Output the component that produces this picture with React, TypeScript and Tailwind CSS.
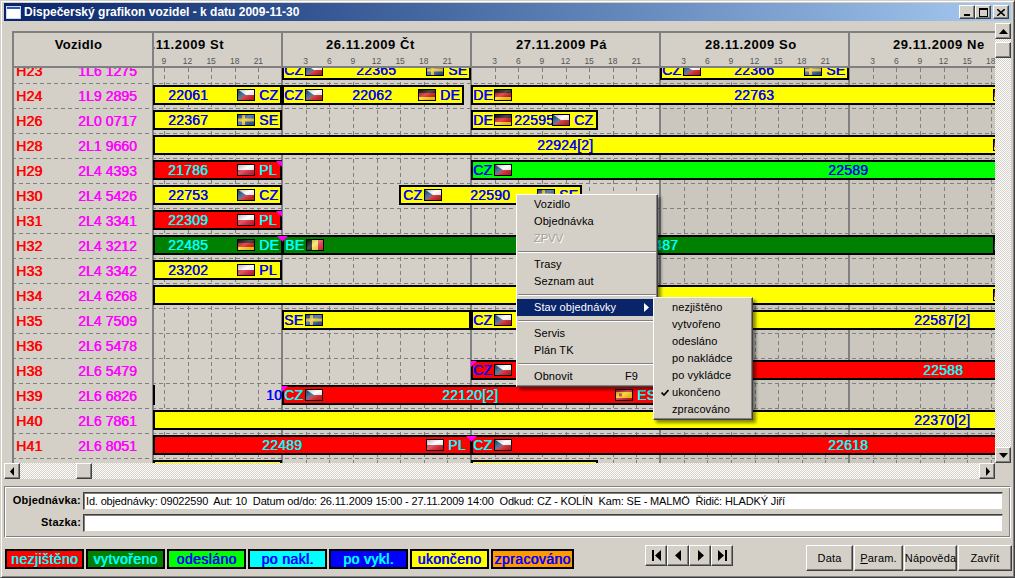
import React from "react";

type FlagCode = "CZ" | "SE" | "DE" | "PL" | "BE" | "ES";

type Item = { x: number; flag?: FlagCode; text?: string };

type Bar = { from: number; to: number; fill: string; ink: string; items?: Item[]; cornerL?: boolean; cornerR?: boolean };

type Row = { id: string; plate: string; bars: Bar[]; extra?: string };

const YEL = "bg-[#ffff00]";
const RED = "bg-[#ff0000]";
const LIME = "bg-[#00ff00]";
const GRN = "bg-[#008000]";
const BLUE = "text-[#0000ff]";
const CYAN = "text-[#00ffff]";

// x souřadnice jsou v px od levého okraje okna, přepočet je až v Gantt
const dest = (x: number, c: FlagCode): Item[] => [
  { x, flag: c },
  { x: x + 22, text: c },
];
const orig = (x: number, c: FlagCode): Item[] => [
  { x, text: c },
  { x: x + 21, flag: c },
];

const ROWS: Row[] = [
  {
    id: "H23",
    plate: "1L6 1275",
    bars: [
      { from: 282, to: 471, fill: YEL, ink: BLUE, items: [...orig(284, "CZ"), { x: 356, text: "22365" }, ...dest(426, "SE")] },
      { from: 660, to: 849, fill: YEL, ink: BLUE, items: [...orig(662, "CZ"), { x: 734, text: "22366" }, ...dest(804, "SE")] },
    ],
  },
  {
    id: "H24",
    plate: "1L9 2895",
    bars: [
      { from: 153, to: 282, fill: YEL, ink: BLUE, items: [{ x: 168, text: "22061" }, ...dest(237, "CZ")] },
      { from: 282, to: 464, fill: YEL, ink: BLUE, items: [...orig(284, "CZ"), { x: 352, text: "22062" }, ...dest(418, "DE")] },
      { from: 471, to: 1000, fill: YEL, ink: BLUE, items: [...orig(473, "DE"), { x: 734, text: "22763" }, { x: 993, flag: "DE" }] },
    ],
  },
  {
    id: "H26",
    plate: "2L0 0717",
    bars: [
      { from: 153, to: 282, fill: YEL, ink: BLUE, items: [{ x: 168, text: "22367" }, ...dest(237, "SE")] },
      { from: 471, to: 598, fill: YEL, ink: BLUE, items: [...orig(473, "DE"), { x: 514, text: "22595" }, ...dest(552, "CZ")] },
    ],
  },
  {
    id: "H28",
    plate: "2L1 9660",
    bars: [{ from: 153, to: 1000, fill: YEL, ink: BLUE, items: [{ x: 537, text: "22924[2]" }, { x: 993, flag: "DE" }] }],
  },
  {
    id: "H29",
    plate: "2L4 4393",
    bars: [
      { from: 153, to: 282, fill: RED, ink: CYAN, cornerR: true, items: [{ x: 168, text: "21786" }, ...dest(237, "PL")] },
      { from: 471, to: 1000, fill: LIME, ink: BLUE, items: [...orig(473, "CZ"), { x: 828, text: "22589" }] },
    ],
  },
  {
    id: "H30",
    plate: "2L4 5426",
    bars: [
      { from: 153, to: 282, fill: YEL, ink: BLUE, items: [{ x: 168, text: "22753" }, ...dest(237, "CZ")] },
      { from: 399, to: 582, fill: YEL, ink: BLUE, items: [...orig(403, "CZ"), { x: 470, text: "22590" }, ...dest(537, "SE")] },
    ],
  },
  {
    id: "H31",
    plate: "2L4 3341",
    bars: [{ from: 153, to: 282, fill: RED, ink: CYAN, cornerR: true, items: [{ x: 168, text: "22309" }, ...dest(237, "PL")] }],
  },
  {
    id: "H32",
    plate: "2L4 3212",
    bars: [
      { from: 153, to: 283, fill: GRN, ink: CYAN, cornerR: true, items: [{ x: 168, text: "22485" }, ...dest(237, "DE")] },
      { from: 282, to: 995, fill: GRN, ink: CYAN, cornerL: true, items: [...orig(285, "BE"), { x: 638, text: "22487" }, { x: 993, flag: "BE" }] },
    ],
  },
  {
    id: "H33",
    plate: "2L4 3342",
    bars: [{ from: 153, to: 282, fill: YEL, ink: BLUE, items: [{ x: 168, text: "23202" }, ...dest(237, "PL")] }],
  },
  {
    id: "H34",
    plate: "2L4 6268",
    bars: [{ from: 153, to: 1000, fill: YEL, ink: BLUE, items: [{ x: 993, flag: "DE" }] }],
  },
  {
    id: "H35",
    plate: "2L4 7509",
    bars: [
      { from: 282, to: 471, fill: YEL, ink: BLUE, items: [...orig(284, "SE")] },
      { from: 471, to: 1000, fill: YEL, ink: BLUE, items: [...orig(473, "CZ"), { x: 914, text: "22587[2]" }] },
    ],
  },
  { id: "H36", plate: "2L6 5478", bars: [] },
  {
    id: "H38",
    plate: "2L6 5479",
    bars: [{ from: 471, to: 1000, fill: RED, ink: BLUE, cornerL: true, items: [...orig(473, "CZ")] }],
    extra: "22588",
  },
  {
    id: "H39",
    plate: "2L6 6826",
    bars: [
      { from: 148, to: 155, fill: "bg-[#d4d0c8]", ink: BLUE },
      { from: 282, to: 670, fill: RED, ink: CYAN, cornerL: true, items: [...orig(284, "CZ"), { x: 442, text: "22120[2]" }, ...dest(615, "ES")] },
    ],
  },
  {
    id: "H40",
    plate: "2L6 7861",
    bars: [{ from: 153, to: 1000, fill: YEL, ink: BLUE, items: [{ x: 914, text: "22370[2]" }] }],
  },
  {
    id: "H41",
    plate: "2L6 8051",
    bars: [
      { from: 153, to: 472, fill: RED, ink: CYAN, cornerR: true, items: [{ x: 262, text: "22489" }, ...dest(426, "PL")] },
      { from: 471, to: 1000, fill: RED, ink: CYAN, cornerL: true, items: [...orig(473, "CZ"), { x: 828, text: "22618" }] },
    ],
  },
  {
    id: "",
    plate: "",
    bars: [
      { from: 153, to: 282, fill: YEL, ink: BLUE },
      { from: 471, to: 598, fill: YEL, ink: BLUE },
    ],
  },
];

const DAYS = [
  { x: 93, label: "25.11.2009 St", off: 43 },
  { x: 282, label: "26.11.2009 Čt", off: 44 },
  { x: 471, label: "27.11.2009 Pá", off: 45 },
  { x: 660, label: "28.11.2009 So", off: 45 },
  { x: 849, label: "29.11.2009 Ne", off: 44 },
];

const HOURS = [3, 6, 9, 12, 15, 18, 21];

const LEGEND = [
  { t: "nezjištěno", w: "w-[79px]", c: "bg-[#ff0000] text-[#00ffff]" },
  { t: "vytvořeno", w: "w-[79px]", c: "bg-[#008000] text-[#00ffff]" },
  { t: "odesláno", w: "w-[79px]", c: "bg-[#00ff00] text-[#0000ff]" },
  { t: "po nakl.", w: "w-[79px]", c: "bg-[#00ffff] text-[#0000ff]" },
  { t: "po vykl.", w: "w-[79px]", c: "bg-[#0000ff] text-[#00ffff]" },
  { t: "ukončeno", w: "w-[79px]", c: "bg-[#ffff00] text-[#0000ff]" },
  { t: "zpracováno", w: "w-[83px]", c: "bg-[#ff9900] text-[#0000ff]" },
];

const raised =
  "border border-t-white border-l-white border-r-[#404040] border-b-[#404040] shadow-[inset_-1px_-1px_0_#808080]";

function Flag({ code }: { code: FlagCode }) {
  const gid = "gloss";
  return (
    <svg width="18" height="12" viewBox="0 0 18 12" className="block">
      {code === "CZ" && (
        <>
          <rect width="18" height="6" fill="#fff" />
          <rect y="6" width="18" height="6" fill="#d7141a" />
          <path d="M0 0 L9 6 L0 12 Z" fill="#11457e" />
        </>
      )}
      {code === "SE" && (
        <>
          <rect width="18" height="12" fill="#1a4f9c" />
          <rect x="5" width="3" height="12" fill="#f2c40f" />
          <rect y="4.5" width="18" height="3" fill="#f2c40f" />
        </>
      )}
      {code === "DE" && (
        <>
          <rect width="18" height="4" fill="#000" />
          <rect y="4" width="18" height="4" fill="#dd0000" />
          <rect y="8" width="18" height="4" fill="#ffce00" />
        </>
      )}
      {code === "PL" && (
        <>
          <rect width="18" height="6" fill="#fff" />
          <rect y="6" width="18" height="6" fill="#e0102a" />
        </>
      )}
      {code === "BE" && (
        <>
          <rect width="6" height="12" fill="#000" />
          <rect x="6" width="6" height="12" fill="#fae042" />
          <rect x="12" width="6" height="12" fill="#ed2939" />
        </>
      )}
      {code === "ES" && (
        <>
          <rect width="18" height="12" fill="#c60b1e" />
          <rect y="3" width="18" height="6" fill="#ffc400" />
          <rect x="4" y="4.5" width="3" height="3" fill="#ad1519" />
        </>
      )}
      <defs>
        <linearGradient id={gid} x1="0" y1="0" x2="1" y2="1">
          <stop offset="0" stopColor="#000" stopOpacity="0.35" />
          <stop offset="0.45" stopColor="#fff" stopOpacity="0.3" />
          <stop offset="1" stopColor="#000" stopOpacity="0.12" />
        </linearGradient>
      </defs>
      <rect width="18" height="12" fill={`url(#${gid})`} />
      <rect x="0.5" y="0.5" width="17" height="11" fill="none" stroke="#000" />
    </svg>
  );
}

function GanttBar({ bar }: { bar: Bar }) {
  // pozice baru je z dat, proto inline style
  return (
    <div
      className={`absolute top-[2px] h-[20px] border-2 border-black ${bar.fill} ${bar.ink}`}
      style={{ left: bar.from - 153, width: bar.to - bar.from }}
    >
      {bar.items?.map((it, i) => (
        <div
          key={i}
          className="absolute top-[2px] h-[12px] flex items-center whitespace-nowrap"
          style={{ left: it.x - bar.from - 2 }}
        >
          {it.flag ? <Flag code={it.flag} /> : it.text}
        </div>
      ))}
      {bar.cornerR && (
        <div className="absolute -top-[1px] -right-[2px] w-0 h-0 border-t-[6px] border-t-[#ff00ff] border-l-[6px] border-l-transparent" />
      )}
      {bar.cornerL && (
        <div className="absolute -top-[1px] -left-[2px] w-0 h-0 border-t-[6px] border-t-[#ff00ff] border-r-[6px] border-r-transparent" />
      )}
    </div>
  );
}

function GridLines() {
  const xs: number[] = [];
  for (const d of [...DAYS.map((d) => d.x)]) {
    for (const h of HOURS) xs.push(d + (h / 3) * 23.625);
  }
  return (
    <svg className="absolute left-0 top-0" width="983" height="395" viewBox="0 0 983 395">
      <rect x="648" width="335" height="395" fill="#cbc7be" />
      {xs
        .filter((x) => x > 155)
        .map((x) => (
          <line
            key={x}
            x1={Math.round(x) - 12 + 0.5}
            x2={Math.round(x) - 12 + 0.5}
            y1="0"
            y2="395"
            stroke="#808080"
            strokeDasharray="4 3"
          />
        ))}
      {Array.from({ length: 16 }).map((_, i) => (
        <line key={i} x1="0" x2="983" y1={15.5 + i * 25} y2={15.5 + i * 25} stroke="#808080" strokeDasharray="4 3" />
      ))}
      {[0, 140, 269, 458, 647, 836].map((x) => (
        <rect key={x} x={x} width="2" height="395" fill="#808080" />
      ))}
    </svg>
  );
}

function ArrowBtn({ d, cls }: { d: string; cls: string }) {
  return (
    <div className={`${cls} bg-[#d4d0c8] ${raised} flex items-center justify-center shrink-0`}>
      <svg width="9" height="9" viewBox="0 0 9 9">
        <path d={d} fill="#000" />
      </svg>
    </div>
  );
}

function NavBtn({ d }: { d: string }) {
  return (
    <div className={`w-[22px] h-[21px] bg-[#d4d0c8] ${raised} flex items-center justify-center`}>
      <svg width="13" height="13" viewBox="0 0 13 13">
        <path d={d} fill="#000" />
      </svg>
    </div>
  );
}

function MenuItem({ t, sel, dim, right, arrow }: { t: string; sel?: boolean; dim?: boolean; right?: string; arrow?: boolean }) {
  return (
    <div
      className={`h-[17px] pl-[17px] pr-[8px] flex items-center justify-between ${
        sel ? "bg-[#0a246a] text-white" : dim ? "text-[#a09e98] [text-shadow:1px_1px_0_#fff]" : "text-black"
      }`}
    >
      <span>{t}</span>
      {right && <span className="mr-[11px]">{right}</span>}
      {arrow && (
        <svg width="5" height="9" viewBox="0 0 5 9">
          <path d="M0 0 L5 4.5 L0 9 Z" fill="#fff" />
        </svg>
      )}
    </div>
  );
}

function Sep() {
  return <div className="mx-[1px] mt-[4px] mb-[3px] h-[2px] border-t border-t-[#808080] border-b border-b-white" />;
}

const menuFrame =
  "absolute bg-[#d4d0c8] border border-t-white border-l-white border-r-[#404040] border-b-[#404040] shadow-[inset_-1px_-1px_0_#808080,3px_3px_3px_rgba(0,0,0,0.45)] font-['Liberation_Sans',sans-serif] text-[11px] tracking-[0.1px]";

export default function App() {
  return (
    <div className="relative w-[1015px] h-[578px] overflow-hidden bg-[#d4d0c8] font-['Liberation_Sans',sans-serif] border border-t-[#d4d0c8] border-l-[#d4d0c8] border-r-[#404040] border-b-[#404040] shadow-[inset_1px_1px_0_#fff,inset_-1px_-1px_0_#808080] p-[3px] pt-[2px] pr-[2px] flex flex-col">
      {/* titulek */}
      <div className="h-[18px] mr-[1px] flex items-center bg-gradient-to-r from-[#0a246a] to-[#a6caf0] shrink-0">
        <svg width="15" height="13" viewBox="0 0 15 13" className="ml-[2px] mr-[3px]">
          <rect width="15" height="13" fill="#fff" />
          <rect width="15" height="3" fill="#2a5bb0" />
          <rect x="0.5" y="0.5" width="14" height="12" fill="none" stroke="#c8d8f0" />
        </svg>
        <span className="text-white font-bold text-[12px]">Dispečerský grafikon vozidel - k datu 2009-11-30</span>
        <div className="ml-auto flex items-center mr-[2px]">
          <div className={`w-[16px] h-[14px] bg-[#d4d0c8] ${raised} flex items-end justify-center pb-[2px]`}>
            <div className="w-[6px] h-[2px] bg-black" />
          </div>
          <div className={`w-[16px] h-[14px] bg-[#d4d0c8] ${raised} flex items-center justify-center`}>
            <div className="w-[9px] h-[9px] border border-black border-t-2" />
          </div>
          <div className={`ml-[2px] w-[16px] h-[14px] bg-[#d4d0c8] ${raised} flex items-center justify-center`}>
            <svg width="8" height="7" viewBox="0 0 8 7">
              <path d="M0 0 L8 7 M8 0 L0 7" stroke="#000" strokeWidth="1.6" />
            </svg>
          </div>
        </div>
      </div>

      <div className="flex flex-1 min-h-0 mt-[2px]">
        <div className="w-[991px] shrink-0 flex flex-col">
          {/* graf */}
          <div className="h-[440px] pl-[8px] pt-[8px]">
            <div className="relative w-[983px] h-[432px] overflow-hidden">
              {/* hlavička */}
              <div className="relative h-[37px] border-t-2 border-[#808080] border-b-2 flex">
                <div className="w-[140px] border-l-2 border-[#808080] text-center font-bold text-[13px] pt-[2px] pr-[9px] tracking-[0.3px] text-black shrink-0">
                  Vozidlo
                </div>
                <div className="relative flex-1 overflow-hidden border-l-2 border-[#808080]">
                  {DAYS.map((d) => (
                    <div key={d.x} className="absolute top-0 h-full w-[189px]" style={{ left: d.x - 154 }}>
                      {d.x > 93 && <div className="absolute left-[-1px] top-0 h-full w-[2px] bg-[#808080]" />}
                      <div
                        className="absolute top-[2px] font-bold text-[13px] tracking-[0.55px] text-black whitespace-nowrap"
                        style={{ left: d.off }}
                      >
                        {d.label}
                      </div>
                      {HOURS.map((h) => (
                        <div
                          key={h}
                          className="absolute top-[23px] w-[16px] -ml-[8px] text-center text-[8.5px] text-[#555] leading-[10px]"
                          style={{ left: (h / 3) * 23.625 }}
                        >
                          {h}
                        </div>
                      ))}
                    </div>
                  ))}
                </div>
              </div>

              {/* řádky */}
              <div className="relative h-[395px] overflow-hidden">
                <GridLines />
                <div className="relative -mt-[10px] text-[14px] tracking-[0.2px] [text-shadow:0.6px_0_0_currentColor]">
                  {ROWS.map((r) => (
                    <div key={r.id || "x"} className="flex h-[25px]">
                      <div className="w-[141px] shrink-0 flex items-center pl-[4px] leading-none pt-[1px]">
                        <span className="w-[62px] text-[#ff0000]">{r.id}</span>
                        <span className="text-[#ff00ff] whitespace-nowrap tracking-[0.05px]">{r.plate}</span>
                      </div>
                      <div className="relative flex-1 min-w-0 overflow-hidden leading-[12px]">
                        {r.bars.map((b, i) => (
                          <GanttBar key={i} bar={b} />
                        ))}
                        {r.id === "H39" && (
                          <div className="absolute top-[6px] left-[113px] text-[#0000ff]">10</div>
                        )}
                        {r.extra && (
                          <div className="absolute top-[6px] left-[770px] text-[#00ffff]">{r.extra}</div>
                        )}
                      </div>
                    </div>
                  ))}
                </div>
              </div>
            </div>
          </div>

          {/* vodorovný posuvník */}
          <div className="h-[16px] flex bg-[repeating-conic-gradient(#fff_0_25%,#d4d0c8_0_50%)] bg-[length:2px_2px]">
            <ArrowBtn d="M6 0 L2 4.5 L6 9 Z" cls="w-[16px] h-[16px]" />
            <div className={`ml-[56px] w-[16px] h-[16px] bg-[#d4d0c8] ${raised}`} />
            <div className="flex-1" />
            <ArrowBtn d="M3 0 L7 4.5 L3 9 Z" cls="w-[16px] h-[16px]" />
          </div>
        </div>

        {/* svislý posuvník */}
        <div className="w-[16px] h-[440px] flex flex-col bg-[repeating-conic-gradient(#fff_0_25%,#d4d0c8_0_50%)] bg-[length:2px_2px]">
          <ArrowBtn d="M4.5 2 L0 7 L9 7 Z" cls="w-[16px] h-[16px]" />
          <div className={`mt-[3px] w-[16px] h-[16px] bg-[#d4d0c8] ${raised}`} />
          <div className="flex-1" />
          <ArrowBtn d="M0 2 L9 2 L4.5 7 Z" cls="w-[16px] h-[16px]" />
        </div>
      </div>

      {/* spodní panel */}
      <div className="absolute left-[3px] top-[485px] w-[1007px] h-[52px] border border-t-[#808080] border-l-[#808080] border-r-white border-b-white shadow-[inset_1px_1px_0_#fff,inset_-1px_-1px_0_#808080] pl-[78px] pr-[7px] pt-[5px] flex flex-col gap-[4px]">
        <div className="relative h-[18px] bg-white border border-t-[#404040] border-l-[#404040] border-r-[#d4d0c8] border-b-[#d4d0c8] shadow-[inset_1px_1px_0_#808080] text-black text-[11px] tracking-[-0.16px] leading-[16px] pl-[2px] whitespace-pre">
          <span className="absolute right-[calc(100%+3px)] -top-[1px] font-bold text-[11px] tracking-[0.2px] text-black">Objednávka:</span>
          Id. objednávky: 09022590  Aut: 10  Datum od/do: 26.11.2009 15:00 - 27.11.2009 14:00  Odkud: CZ - KOLÍN  Kam: SE - MALMÖ  Řidič: HLADKÝ Jiří
        </div>
        <div className="relative h-[18px] bg-white border border-t-[#404040] border-l-[#404040] border-r-[#d4d0c8] border-b-[#d4d0c8] shadow-[inset_1px_1px_0_#808080]">
          <span className="absolute right-[calc(100%+3px)] -top-[1px] font-bold text-[11px] tracking-[0.2px] text-black">Stazka:</span>
        </div>
      </div>

      {/* legenda a tlačítka */}
      <div className="absolute left-[4px] top-[544px] w-[1007px] h-[26px] flex">
        <div className="flex gap-[2px] pt-[4px] h-[24px]">
          {LEGEND.map((l) => (
            <div
              key={l.t}
              className={`${l.w} h-[20px] border-2 border-black text-[14px] tracking-[0.4px] [text-shadow:0.6px_0_0_currentColor] text-center leading-[16px] ${l.c}`}
            >
              {l.t}
            </div>
          ))}
        </div>
        <div className="ml-[71px] flex">
          <NavBtn d="M2 1 H4 V12 H2 Z M11 1 V12 L5 6.5 Z" />
          <NavBtn d="M9 1 V12 L3 6.5 Z" />
          <NavBtn d="M4 1 V12 L10 6.5 Z" />
          <NavBtn d="M2 1 V12 L8 6.5 Z M9 1 H11 V12 H9 Z" />
        </div>
        <div className="ml-auto flex gap-[1px] text-[11px] tracking-[0.15px] text-black">
          <div className={`w-[47px] bg-[#d4d0c8] ${raised} flex items-center justify-center`}>Data</div>
          <div className={`w-[49px] bg-[#d4d0c8] ${raised} flex items-center justify-center`}>
            <span>
              <span className="underline">P</span>aram.
            </span>
          </div>
          <div className={`w-[53px] bg-[#d4d0c8] ${raised} flex items-center justify-center`}>Nápověda</div>
          <div className={`w-[54px] bg-[#d4d0c8] ${raised} flex items-center justify-center`}>Zavřít</div>
        </div>
      </div>

      {/* kontextové menu */}
      <div className={`${menuFrame} left-[515px] top-[193px] w-[142px] py-[1px]`}>
        <MenuItem t="Vozidlo" />
        <MenuItem t="Objednávka" />
        <MenuItem t="ZPVV" dim />
        <Sep />
        <MenuItem t="Trasy" />
        <MenuItem t="Seznam aut" />
        <Sep />
        <MenuItem t="Stav objednávky" sel arrow />
        <Sep />
        <MenuItem t="Servis" />
        <MenuItem t="Plán TK" />
        <Sep />
        <MenuItem t="Obnovit" right="F9" />
      </div>

      <div className={`${menuFrame} left-[652px] top-[296px] w-[100px] py-[1px]`}>
        {["nezjištěno", "vytvořeno", "odesláno", "po nakládce", "po vykládce", "ukončeno", "zpracováno"].map((t) => (
          <div key={t} className="h-[17px] pl-[18px] flex items-center relative text-black">
            {t === "ukončeno" && (
              <svg width="8" height="7" viewBox="0 0 8 7" className="absolute left-[7px] top-[5px]">
                <path d="M0.5 3.5 L3 6 L7.5 1" fill="none" stroke="#000" strokeWidth="1.7" />
              </svg>
            )}
            {t}
          </div>
        ))}
      </div>
    </div>
  );
}
